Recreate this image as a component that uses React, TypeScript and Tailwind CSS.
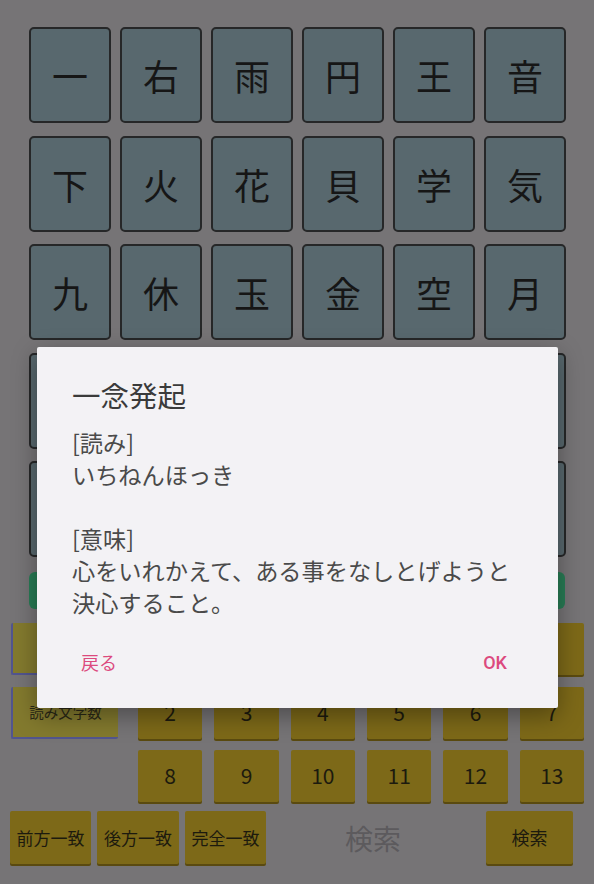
const kanji = [
  '一', '右', '雨', '円', '王', '音',
  '下', '火', '花', '貝', '学', '気',
  '九', '休', '玉', '金', '空', '月',
  '犬', '見', '五', '口', '校', '左',
  '三', '山', '子', '四', '糸', '字',
]

const numberRows = [
  ['1', '2', '3', '4', '5', '6'],
  ['2', '3', '4', '5', '6', '7'],
  ['8', '9', '10', '11', '12', '13'],
]

const jp = { fontFamily: '"Noto Sans CJK JP", "Noto Sans", sans-serif' }
const num = { fontFamily: 'Roboto, "Noto Sans CJK JP", sans-serif' }

function YellowButton({ label, className = '' }: { label: string; className?: string }) {
  return (
    <div
      className={`flex items-center justify-center rounded-[2px] bg-[#7d6918] text-[#1c1a0e] shadow-[0_2px_0_#5a4a10] ${className}`}
    >
      {label}
    </div>
  )
}

export default function App() {
  return (
    <div className="relative h-[884px] w-full overflow-hidden bg-[#767476]" style={jp}>
      {/* Kanji tiles */}
      <div className="grid grid-cols-6 gap-x-[9px] gap-y-[12.5px] pl-[29px] pr-[28px] pt-[27px]">
        {kanji.map((k, i) => (
          <div
            key={i}
            className="flex h-[96px] items-center justify-center rounded-[5px] border-2 border-[#262728] bg-[#58686e] text-[36px] text-[#161616]"
          >
            {k}
          </div>
        ))}
      </div>

      {/* Green bar */}
      <div className="mx-[29px] mt-[15px] h-[37px] rounded-[6px] bg-[#287c55]" />

      {/* Count selectors */}
      <div className="mt-[14px] flex pl-[11px] pr-[10px]">
        <div className="flex w-[107px] flex-col gap-[12px]">
          <div className="flex h-[52px] items-center justify-center rounded-[2px] border-b-2 border-l-2 border-[#52558f] bg-[#837a2e] text-[14.5px] text-[#2a2816]">
            漢字数
          </div>
          <div className="flex h-[52px] items-center justify-center rounded-[2px] border-b-2 border-l-2 border-[#52558f] bg-[#837a2e] text-[14.5px] text-[#2a2816]">
            読み文字数
          </div>
        </div>
        <div className="ml-[20px] flex flex-1 flex-col gap-[11.5px]">
          {numberRows.map((row, r) => (
            <div key={r} className="grid grid-cols-6 gap-x-[12px]">
              {row.map((n, i) => (
                <YellowButton key={i} label={n} className="h-[52px] text-[21px]" />
              ))}
            </div>
          ))}
        </div>
      </div>

      {/* Search row */}
      <div className="mt-[9px] flex items-center pl-[10px] pr-[21px]">
        <div className="flex gap-[6px] text-[17px]">
          <YellowButton label="前方一致" className="h-[53px] w-[81px]" />
          <YellowButton label="後方一致" className="h-[53px] w-[82px]" />
          <YellowButton label="完全一致" className="h-[53px] w-[81px]" />
        </div>
        <div className="flex-1 pr-[6px] text-center text-[28px] text-[#5c5a5d]">検索</div>
        <YellowButton label="検索" className="h-[53px] w-[87px] text-[18px]" />
      </div>

      {/* Dialog */}
      <div className="absolute left-[37px] top-[347px] flex h-[361px] w-[521px] flex-col rounded-[2px] bg-[#f3f2f5] pl-[35px] pr-[20px] pt-[30px] shadow-[0_8px_24px_rgba(0,0,0,0.35)]">
        <div className="text-[28.5px] leading-[36px] text-[#3a3a3a]">一念発起</div>
        <div className="mt-[13px] whitespace-pre-line text-[23.2px] leading-[32px] text-[#4a4a4a]">
          {'[読み]\nいちねんほっき\n\n[意味]\n心をいれかえて、ある事をなしとげようと\n決心すること。'}
        </div>
        <div className="mt-auto mb-[32px] flex items-center justify-between pl-[9px] pr-[31px] text-[18px] text-[#dc4a7e]">
          <span>戻る</span>
          <span className="font-medium" style={num}>OK</span>
        </div>
      </div>
    </div>
  )
}
